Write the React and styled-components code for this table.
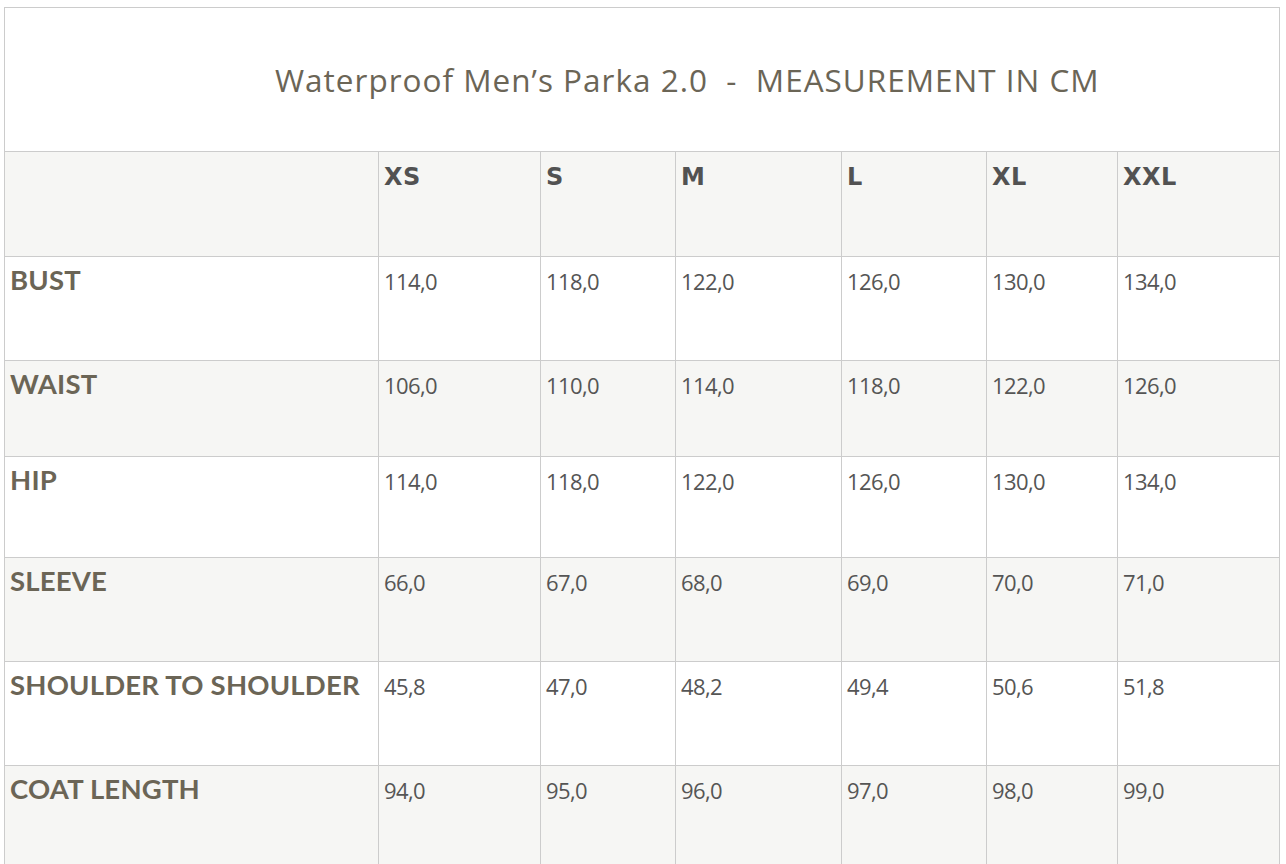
import styled, { createGlobalStyle } from 'styled-components';

const GlobalStyle = createGlobalStyle`
    html, body {
        margin: 0;
        padding: 0;
        background: #fff;
    }
    body {
        font-family: "Open Sans", "Liberation Sans", sans-serif;
    }
`;

const Olive = '#6b6556';
const Ink = '#555555';
const Stripe = '#f6f6f4';
const Line = '#cccccc';

const widths = [374, 162, 135, 166, 145, 131, 162];
const sizes = ['XS', 'S', 'M', 'L', 'XL', 'XXL'];

const rows = [
    { label: 'BUST', h: 104, values: ['114,0', '118,0', '122,0', '126,0', '130,0', '134,0'] },
    { label: 'WAIST', h: 96, values: ['106,0', '110,0', '114,0', '118,0', '122,0', '126,0'] },
    { label: 'HIP', h: 101, values: ['114,0', '118,0', '122,0', '126,0', '130,0', '134,0'] },
    { label: 'SLEEVE', h: 104, values: ['66,0', '67,0', '68,0', '69,0', '70,0', '71,0'] },
    { label: 'SHOULDER TO SHOULDER', h: 104, values: ['45,8', '47,0', '48,2', '49,4', '50,6', '51,8'] },
    { label: 'COAT LENGTH', h: 104, values: ['94,0', '95,0', '96,0', '97,0', '98,0', '99,0'] },
];

// ############## Page ##################
const Page = styled.div`
    padding: 7px 6px 0 4px;
`;

const Table = styled.table`
    width: 1276px;
    border-collapse: collapse;
    table-layout: fixed;
`;

const TitleCell = styled.th`
    height: 143px;
    border: 1px solid ${Line};
    background: #fff;
    padding: 0 0 0 270px;
    text-align: left;
    font-family: "Open Sans", "Liberation Sans", sans-serif;
    font-weight: 400;
    font-size: 31.5px;
    letter-spacing: 1px;
    color: ${Olive};
    white-space: pre;
`;

// ############## Rows ##################
const Row = styled.tr`
    height: ${(p) => p.$h}px;
    background: ${(p) => (p.$shade ? Stripe : '#fff')};
`;

const Cell = styled.td`
    border: 1px solid ${Line};
    vertical-align: top;
    padding: 9px 5px 0 5px;
    font-family: "Open Sans", "Liberation Sans", sans-serif;
    font-size: 22px;
    letter-spacing: -0.6px;
    color: ${Ink};
`;

const SizeCell = styled(Cell)`
    padding-top: 11px;
    font-family: "DejaVu Sans", "Open Sans", sans-serif;
    font-weight: 700;
    font-size: 24px;
    letter-spacing: 0.5px;
    color: #525252;
`;

const LabelCell = styled(Cell)`
    padding-top: 6px;
    font-family: Lato, "Liberation Sans", sans-serif;
    font-weight: 700;
    font-size: 27.5px;
    letter-spacing: 0.2px;
    color: ${Olive};
    white-space: nowrap;
`;

export default function App() {
    return (
        <Page>
            <GlobalStyle />
            <Table>
                <colgroup>
                    {widths.map((w, i) => (
                        <col key={i} style={{ width: w }} />
                    ))}
                </colgroup>
                <tbody>
                    <tr>
                        <TitleCell colSpan={7}>{'Waterproof Men’s Parka 2.0  -  MEASUREMENT IN CM'}</TitleCell>
                    </tr>
                    <Row $h={105} $shade>
                        <Cell />
                        {sizes.map((s) => (
                            <SizeCell key={s}>{s}</SizeCell>
                        ))}
                    </Row>
                    {rows.map((r, i) => (
                        <Row key={r.label} $h={r.h} $shade={i % 2 === 1}>
                            <LabelCell>{r.label}</LabelCell>
                            {r.values.map((v, j) => (
                                <Cell key={j}>{v}</Cell>
                            ))}
                        </Row>
                    ))}
                </tbody>
            </Table>
        </Page>
    );
}
